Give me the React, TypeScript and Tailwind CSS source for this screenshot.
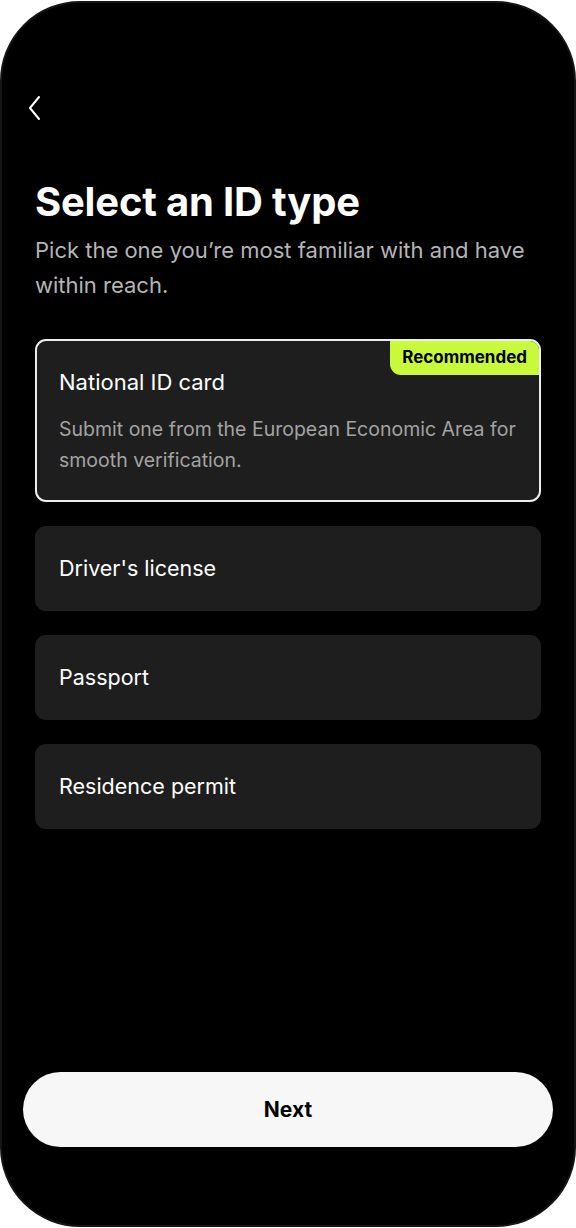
import { useState } from 'react'

const options = [
  { id: 'national', label: 'National ID card', description: 'Submit one from the European Economic Area for smooth verification.' },
  { id: 'driver', label: "Driver's license" },
  { id: 'passport', label: 'Passport' },
  { id: 'residence', label: 'Residence permit' },
]

const BackIcon = () => (
  <svg width="16" height="26" viewBox="0 0 16 26" fill="none">
    <path d="M12 2 L3 13 L12 24" stroke="white" strokeWidth="2" strokeLinecap="round" strokeLinejoin="round" />
  </svg>
)

const App = () => {
  const [selected, setSelected] = useState('national')

  return (
    <div className="w-[576px] h-[1228px] bg-white py-[1px] font-['Inter',sans-serif]">
      <div className="h-full rounded-[80px] bg-black border-2 border-[#151515] flex flex-col overflow-hidden">
        <div className="pt-[92px] pl-[25px]">
          <button className="block">
            <BackIcon />
          </button>
        </div>

        <div className="px-[33px]">
          <h1 className="mt-[57px] text-[40px] leading-[48px] font-bold text-white tracking-[-0.2px]">
            Select an ID type
          </h1>
          <p className="mt-[7px] text-[22px] leading-[35px] text-[#b5b5b5]">
            Pick the one you’re most familiar with and have within reach.
          </p>

          <div className="mt-[36px] flex flex-col gap-[24px]">
            {options.map((option) => {
              const isActive = selected === option.id
              if (option.description) {
                return (
                  <div
                    key={option.id}
                    onClick={() => setSelected(option.id)}
                    className={`relative rounded-[11px] bg-[#1e1e1e] border-2 cursor-pointer pt-[26px] pb-[24px] px-[22px] ${
                      isActive ? 'border-[#ededed]' : 'border-[#1e1e1e]'
                    }`}
                  >
                    <div className="absolute top-0 right-0 bg-[#c8f93a] rounded-tr-[9px] rounded-bl-[11px] h-[34px] px-[12px] flex items-center text-[17px] font-bold text-black">
                      Recommended
                    </div>
                    <div className="text-[22px] leading-[30px] text-white">{option.label}</div>
                    <div className="mt-[17px] text-[19.5px] leading-[31px] text-[#a3a3a3]">
                      {option.description}
                    </div>
                  </div>
                )
              }
              return (
                <div
                  key={option.id}
                  onClick={() => setSelected(option.id)}
                  className={`h-[85px] rounded-[11px] bg-[#1e1e1e] border-2 cursor-pointer px-[22px] flex items-center text-[21.5px] text-white ${
                    isActive ? 'border-[#ededed]' : 'border-[#1e1e1e]'
                  }`}
                >
                  {option.label}
                </div>
              )
            })}
          </div>
        </div>

        <div className="flex-1" />

        <div className="px-[21px] pb-[78px]">
          <button className="w-full h-[75px] rounded-full bg-[#f7f7f7] text-[21px] font-bold text-black">
            Next
          </button>
        </div>
      </div>
    </div>
  )
}

export default App
